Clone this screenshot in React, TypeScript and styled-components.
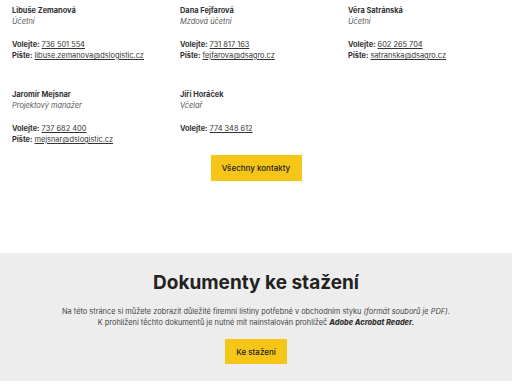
import styled, { createGlobalStyle } from 'styled-components';

const GlobalStyle = createGlobalStyle`
	html, body {
		margin: 0;
		padding: 0;
		background: #fff;
		font-family: Inter, 'Noto Sans', sans-serif;
		color: #222;
	}
`;

const Page = styled.div`
	width: 512px;
	height: 384px;
	overflow: hidden;
`;

const ContactsSection = styled.section`
	padding: 5px 0 0 12px;
	height: 248px;
`;

const ContactsGrid = styled.div`
	display: grid;
	grid-template-columns: 168px 168px 164px;
	row-gap: 28px;
`;

const Card = styled.div`
	font-size: 7.4px;
	line-height: 11px;
`;

const Name = styled.div`
	font-weight: 700;
	color: #333;
`;

const Role = styled.div`
	font-style: italic;
	color: #555;
	margin-bottom: 12px;
`;

const Line = styled.div`
	color: #333;
	b {
		font-weight: 700;
	}
	a {
		color: #333;
		text-decoration: underline;
		text-underline-offset: 1px;
	}
`;

const ButtonRow = styled.div<{ $top: number; $left?: number }>`
	display: flex;
	justify-content: center;
	margin: ${(p) => p.$top}px 0 0 ${(p) => p.$left ?? 0}px;
`;

const YellowButton = styled.a<{ $w: number; $h: number }>`
	display: flex;
	align-items: center;
	justify-content: center;
	width: ${(p) => p.$w}px;
	height: ${(p) => p.$h}px;
	background: #f5c518;
	color: #222;
	font-size: 8px;
	font-weight: 500;
	text-decoration: none;
`;

const DocsSection = styled.section`
	background: #ededed;
	height: 128px;
	padding-top: 18px;
	box-sizing: border-box;
	text-align: center;
`;

const Title = styled.h2`
	margin: 0;
	font-size: 19px;
	line-height: 24px;
	font-weight: 700;
	color: #222;
`;

const Text = styled.p`
	margin: 11px 0 0;
	font-size: 7.4px;
	line-height: 11px;
	color: #444;
	em {
		font-style: italic;
	}
	strong {
		font-style: italic;
		font-weight: 800;
		color: #333;
	}
`;

const contacts = [
	{ name: 'Libuše Zemanová', role: 'Účetní', phone: '736 501 554', mail: 'libuse.zemanova@dslogistic.cz' },
	{ name: 'Dana Fejfarová', role: 'Mzdová účetní', phone: '731 817 163', mail: 'fejfarova@dsagro.cz' },
	{ name: 'Věra Satránská', role: 'Účetní', phone: '602 265 704', mail: 'satranska@dsagro.cz' },
	{ name: 'Jaromír Mejsnar', role: 'Projektový manažer', phone: '737 682 400', mail: 'mejsnar@dslogistic.cz' },
	{ name: 'Jiří Horáček', role: 'Včelař', phone: '774 348 612', mail: '' },
];

export default function App() {
	return (
		<Page>
			<GlobalStyle />
			<ContactsSection>
				<ContactsGrid>
					{contacts.map((c) => (
						<Card key={c.name}>
							<Name>{c.name}</Name>
							<Role>{c.role}</Role>
							<Line>
								<b>Volejte:</b> <a href="#">{c.phone}</a>
							</Line>
							{c.mail && (
								<Line>
									<b>Píšte:</b> <a href="#">{c.mail}</a>
								</Line>
							)}
						</Card>
					))}
				</ContactsGrid>
				<ButtonRow $top={10} $left={-12}>
					<YellowButton href="#" $w={91} $h={26}>
						Všechny kontakty
					</YellowButton>
				</ButtonRow>
			</ContactsSection>
			<DocsSection>
				<Title>Dokumenty ke stažení</Title>
				<Text>
					Na této stránce si můžete zobrazit důležité firemní listiny potřebné v obchodním styku{' '}
					<em>(formát souborů je PDF)</em>.
					<br />K prohlížení těchto dokumentů je nutné mít nainstalován prohlížeč{' '}
					<strong>Adobe Acrobat Reader.</strong>
				</Text>
				<ButtonRow $top={11}>
					<YellowButton href="#" $w={62} $h={25}>
						Ke stažení
					</YellowButton>
				</ButtonRow>
			</DocsSection>
		</Page>
	);
}
